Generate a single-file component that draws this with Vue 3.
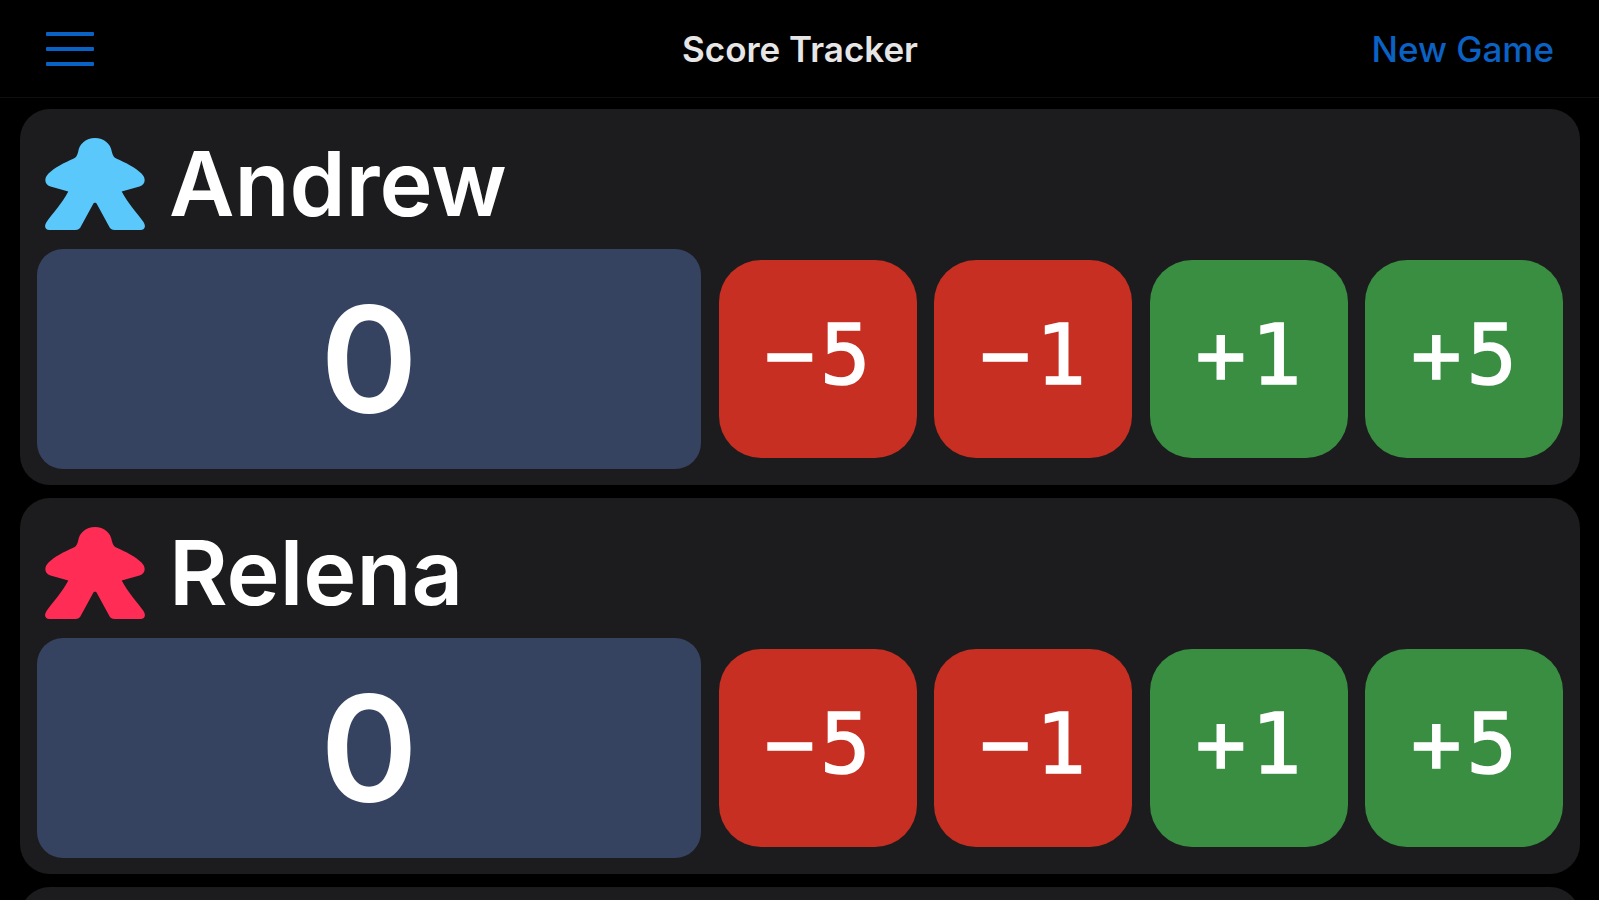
<script setup>
import { ref } from 'vue'

const players = ref([
  { name: 'Andrew', color: '#5ac8fa', score: 0 },
  { name: 'Relena', color: '#ff2d55', score: 0 }
])

const steps = [-5, -1, 1, 5]

function label(step) {
  return (step < 0 ? '−' : '+') + Math.abs(step)
}

function change(player, step) {
  player.score += step
}
</script>

<template>
  <div class="page">
    <header class="nav">
      <button class="menu" aria-label="Menu">
        <span></span>
        <span></span>
        <span></span>
      </button>
      <div class="title">Score Tracker</div>
      <button class="new-game" @click="players.forEach(p => (p.score = 0))">New Game</button>
    </header>

    <main class="list">
      <section v-for="player in players" :key="player.name" class="card">
        <div class="player">
          <svg class="meeple" viewBox="0 0 100 93" :style="{ fill: player.color }">
            <path d="M50 0C59 0 66 6 67 14C68 18 69 20 72 21C81 25 91 30 97 36C102 41 101 47 95 49L77 54C83 66 93 76 99 85C102 90 100 93 96 93L70 93C67 93 65 92 64 89L52 67C51 65 49 65 48 67L36 89C35 92 33 93 30 93L4 93C0 93 -2 90 1 85C7 76 17 66 23 54L5 49C-1 47 -2 41 3 36C9 30 19 25 28 21C31 20 32 18 33 14C34 6 41 0 50 0Z" />
          </svg>
          <h2 class="name">{{ player.name }}</h2>
        </div>
        <div class="controls">
          <div class="score">{{ player.score }}</div>
          <button
            v-for="step in steps"
            :key="step"
            class="step"
            :class="step < 0 ? 'minus' : 'plus'"
            @click="change(player, step)"
          >
            {{ label(step) }}
          </button>
        </div>
      </section>
      <section class="card"></section>
    </main>
  </div>
</template>

<style scoped>
.page {
  height: 900px;
  overflow: hidden;
  background: #000;
  color: #fff;
  font-family: Inter, "Liberation Sans", sans-serif;
}
.nav {
  height: 97px;
  border-bottom: 1px solid #101010;
  padding: 0 45px 0 46px;
  display: grid;
  grid-template-columns: 1fr auto 1fr;
  align-items: center;
}
.menu {
  width: 48px;
  display: flex;
  flex-direction: column;
  gap: 11px;
  padding: 0;
  border: 0;
  background: none;
}
.menu span {
  height: 4px;
  border-radius: 1px;
  background: #0a62c4;
}
.title {
  font-size: 35px;
  font-weight: 600;
  color: #e6e6e6;
}
.new-game {
  justify-self: end;
  padding: 0;
  border: 0;
  background: none;
  font-family: inherit;
  font-size: 35px;
  font-weight: 500;
  color: #0a62c4;
}
.list {
  padding: 11px 19px 0 20px;
  display: flex;
  flex-direction: column;
  gap: 13px;
}
.card {
  flex: none;
  height: 376px;
  box-sizing: border-box;
  padding: 29px 17px 0 17px;
  border-radius: 30px;
  background: #1c1c1e;
}
.player {
  height: 92px;
  margin-bottom: 19px;
  padding-left: 8px;
  display: flex;
  align-items: center;
  gap: 24px;
}
.meeple {
  width: 100px;
  height: 92px;
}
.name {
  margin: 0;
  font-size: 90px;
  font-weight: 600;
  line-height: 92px;
}
.controls {
  display: flex;
  align-items: center;
  gap: 17.5px;
}
.score {
  flex: 1;
  height: 220px;
  box-sizing: border-box;
  border-radius: 26px;
  background: #354360;
  display: flex;
  align-items: center;
  justify-content: center;
  font-size: 148px;
  font-weight: 600;
}
.step {
  width: 198px;
  height: 198px;
  padding: 0 0 9px 5px;
  border: 0;
  border-radius: 42px;
  color: #fff;
  font-family: "DejaVu Sans Mono", monospace;
  font-size: 84px;
  letter-spacing: 5px;
  -webkit-text-stroke: 1.5px #fff;
}
.minus {
  background: #c62f22;
}
.plus {
  background: #398e42;
}
</style>

<style>
html,
body {
  margin: 0;
  background: #000;
  overflow: hidden;
}
</style>
